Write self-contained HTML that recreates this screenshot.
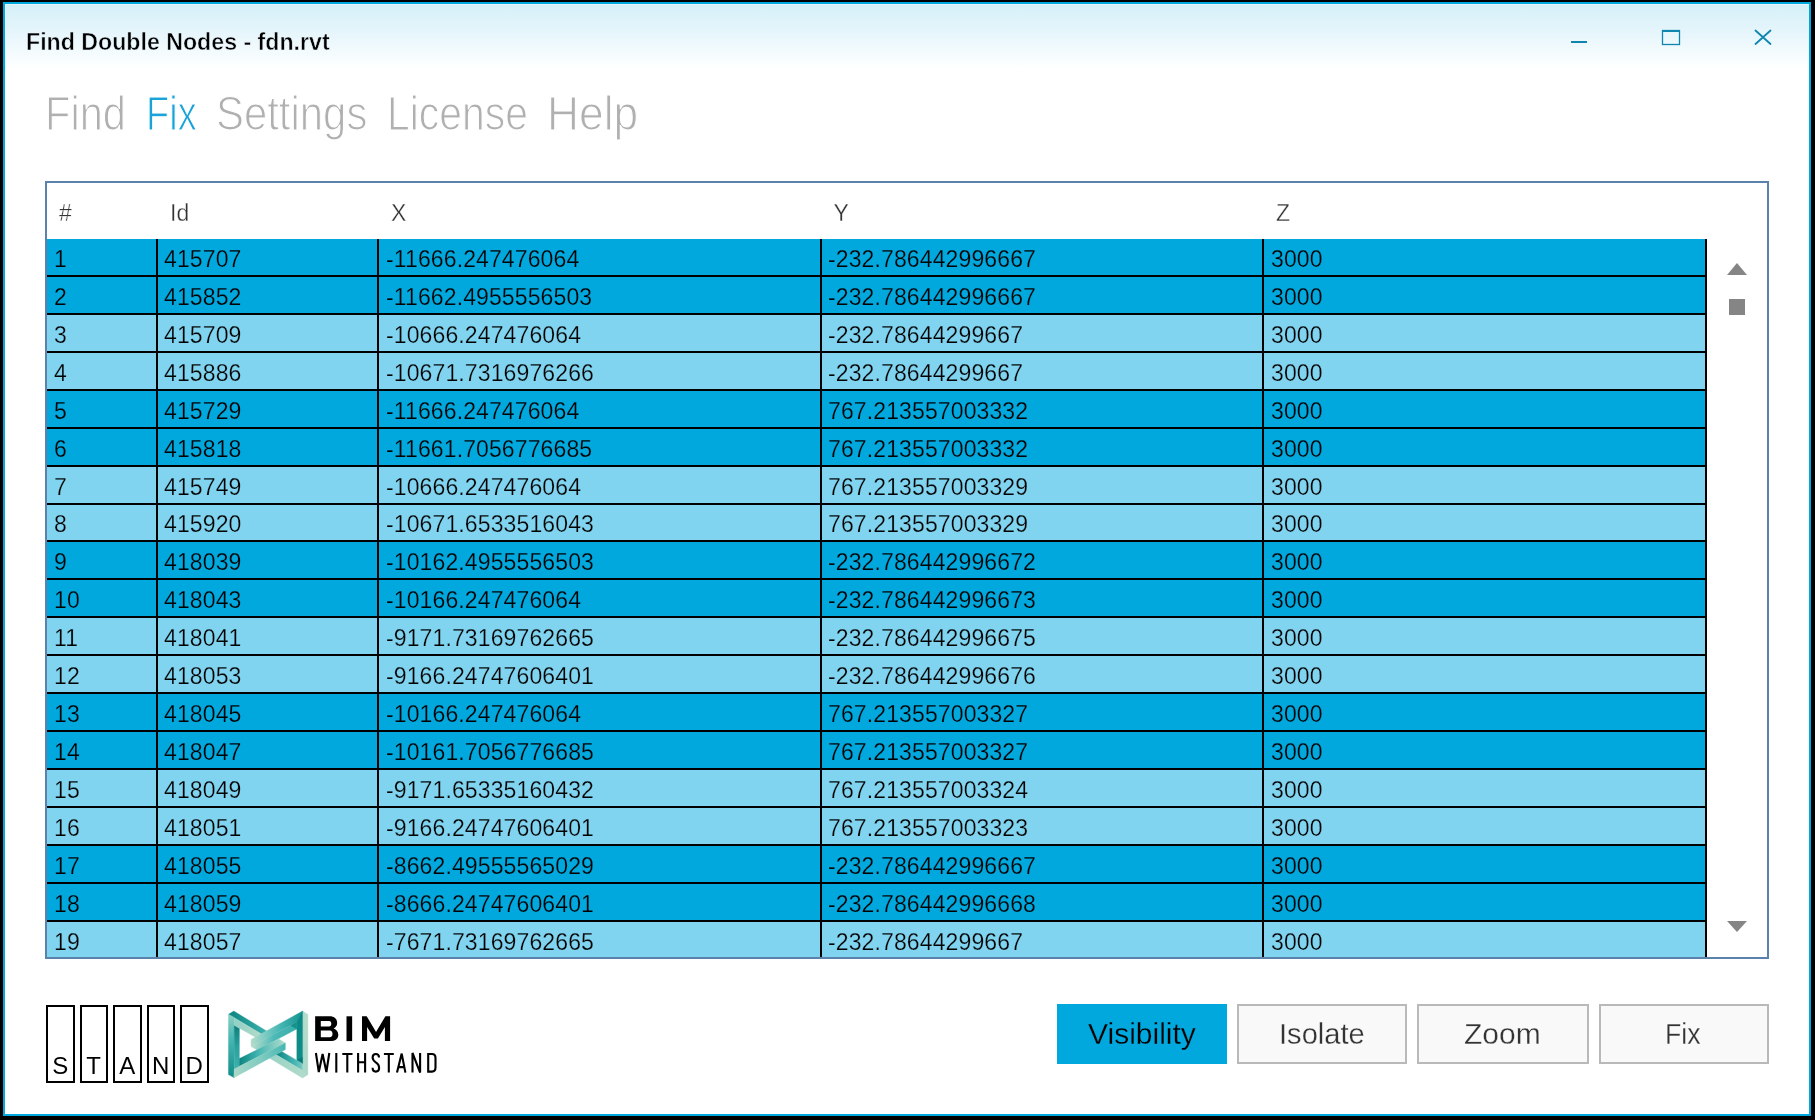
<!DOCTYPE html>
<html><head><meta charset="utf-8"><style>
*{margin:0;padding:0;box-sizing:border-box}
html,body{width:1815px;height:1120px;overflow:hidden;background:#000}
body{position:relative;font-family:"Liberation Sans",sans-serif}
.a{position:absolute}
.win{position:absolute;left:3px;top:2px;width:1808px;height:1114px;border:2px solid #00a8e0;background:#fff;overflow:hidden}
.tg{position:absolute;left:0;top:0;width:1804px;height:65px;background:linear-gradient(to bottom,#d5f0f9 0%,#e4f5fb 40%,#f6fcfe 80%,#ffffff 100%)}
.t{position:absolute;white-space:nowrap;line-height:1}
.tab{font-size:49px;color:#b0b0b0;transform-origin:0 0;-webkit-text-stroke:1.2px #fff}
.cell{font-size:23px;color:#000;letter-spacing:0.12px}
.hdr{font-size:23px;color:#333;-webkit-text-stroke:0.3px #fff}
.btn{position:absolute;top:1004px;height:60px;width:170px;border:2px solid #b9b9b9;background:#f9f9f9}
.bt{font-size:30px;color:#333;-webkit-text-stroke:0.3px #f9f9f9}
.st{position:absolute;top:1005px;width:29px;height:78px;border:2px solid #000;background:#fff}
.sl{position:absolute;font-size:24px;color:#000;line-height:1}
</style></head><body><div style="position:absolute;left:0;top:0;width:1815px;height:1120px;background:#000;will-change:transform">

<div class="win"><div class="tg"></div></div>
<div class="a" style="left:5px;top:4px;width:1804px;height:1px;background:#e4f5fb"></div>
<div class="a" style="left:5px;top:4px;width:1px;height:66px;background:#e4f5fb"></div>
<div class="t" style="left:26px;top:30px;font-size:24px;font-weight:bold;color:#000;-webkit-text-stroke:0.5px #e7f5fb;transform:scaleX(0.965);transform-origin:0 0">Find Double Nodes - fdn.rvt</div>
<svg class="a" style="left:1540px;top:10px" width="260" height="50" viewBox="1540 10 260 50">
<rect x="1571" y="41" width="16" height="2" fill="#0e86b0"/>
<rect x="1662.5" y="30.5" width="17" height="14" fill="none" stroke="#0e86b0" stroke-width="1.3"/>
<rect x="1662" y="30" width="18" height="2" fill="#0e86b0"/>
<path d="M1755.5 30.5 L1770.5 44 M1770.5 30.5 L1755.5 44" stroke="#0e86b0" stroke-width="1.8" stroke-linecap="round"/>
</svg>
<div class="t tab" style="left:45.41px;top:89px;color:#b0b0b0;transform:scaleX(0.8483)">Find</div>
<div class="t tab" style="left:146.13px;top:89px;color:#1aa3d8;transform:scaleX(0.7749)">Fix</div>
<div class="t tab" style="left:216.24px;top:89px;color:#b0b0b0;transform:scaleX(0.8548)">Settings</div>
<div class="t tab" style="left:387.06px;top:89px;color:#b0b0b0;transform:scaleX(0.8344)">License</div>
<div class="t tab" style="left:546.78px;top:89px;color:#b0b0b0;transform:scaleX(0.9046)">Help</div>
<div class="a" style="left:45px;top:181px;width:1724px;height:778px;border:2px solid #5a82aa;background:#fff"></div>
<div class="t hdr" style="left:59px;top:202px">#</div>
<div class="t hdr" style="left:170px;top:202px">Id</div>
<div class="t hdr" style="left:391px;top:202px">X</div>
<div class="t hdr" style="left:833.5px;top:202px">Y</div>
<div class="t hdr" style="left:1276px;top:202px">Z</div>
<div class="a" style="left:47px;top:239px;width:1658px;height:36px;background:#00a8de"></div>
<div class="a" style="left:47px;top:275px;width:1660px;height:2px;background:#000"></div>
<div class="t cell" style="left:54px;top:248.0px;-webkit-text-stroke:0.25px #00a8de">1</div>
<div class="t cell" style="left:164px;top:248.0px;-webkit-text-stroke:0.25px #00a8de">415707</div>
<div class="t cell" style="left:386px;top:248.0px;-webkit-text-stroke:0.25px #00a8de">-11666.247476064</div>
<div class="t cell" style="left:828px;top:248.0px;-webkit-text-stroke:0.25px #00a8de">-232.786442996667</div>
<div class="t cell" style="left:1271px;top:248.0px;-webkit-text-stroke:0.25px #00a8de">3000</div>
<div class="a" style="left:47px;top:277px;width:1658px;height:36px;background:#00a8de"></div>
<div class="a" style="left:47px;top:313px;width:1660px;height:2px;background:#000"></div>
<div class="t cell" style="left:54px;top:285.9px;-webkit-text-stroke:0.25px #00a8de">2</div>
<div class="t cell" style="left:164px;top:285.9px;-webkit-text-stroke:0.25px #00a8de">415852</div>
<div class="t cell" style="left:386px;top:285.9px;-webkit-text-stroke:0.25px #00a8de">-11662.4955556503</div>
<div class="t cell" style="left:828px;top:285.9px;-webkit-text-stroke:0.25px #00a8de">-232.786442996667</div>
<div class="t cell" style="left:1271px;top:285.9px;-webkit-text-stroke:0.25px #00a8de">3000</div>
<div class="a" style="left:47px;top:315px;width:1658px;height:36px;background:#80d4f0"></div>
<div class="a" style="left:47px;top:351px;width:1660px;height:2px;background:#000"></div>
<div class="t cell" style="left:54px;top:323.8px;-webkit-text-stroke:0.25px #80d4f0">3</div>
<div class="t cell" style="left:164px;top:323.8px;-webkit-text-stroke:0.25px #80d4f0">415709</div>
<div class="t cell" style="left:386px;top:323.8px;-webkit-text-stroke:0.25px #80d4f0">-10666.247476064</div>
<div class="t cell" style="left:828px;top:323.8px;-webkit-text-stroke:0.25px #80d4f0">-232.78644299667</div>
<div class="t cell" style="left:1271px;top:323.8px;-webkit-text-stroke:0.25px #80d4f0">3000</div>
<div class="a" style="left:47px;top:353px;width:1658px;height:36px;background:#80d4f0"></div>
<div class="a" style="left:47px;top:389px;width:1660px;height:2px;background:#000"></div>
<div class="t cell" style="left:54px;top:361.8px;-webkit-text-stroke:0.25px #80d4f0">4</div>
<div class="t cell" style="left:164px;top:361.8px;-webkit-text-stroke:0.25px #80d4f0">415886</div>
<div class="t cell" style="left:386px;top:361.8px;-webkit-text-stroke:0.25px #80d4f0">-10671.7316976266</div>
<div class="t cell" style="left:828px;top:361.8px;-webkit-text-stroke:0.25px #80d4f0">-232.78644299667</div>
<div class="t cell" style="left:1271px;top:361.8px;-webkit-text-stroke:0.25px #80d4f0">3000</div>
<div class="a" style="left:47px;top:391px;width:1658px;height:36px;background:#00a8de"></div>
<div class="a" style="left:47px;top:427px;width:1660px;height:2px;background:#000"></div>
<div class="t cell" style="left:54px;top:399.7px;-webkit-text-stroke:0.25px #00a8de">5</div>
<div class="t cell" style="left:164px;top:399.7px;-webkit-text-stroke:0.25px #00a8de">415729</div>
<div class="t cell" style="left:386px;top:399.7px;-webkit-text-stroke:0.25px #00a8de">-11666.247476064</div>
<div class="t cell" style="left:828px;top:399.7px;-webkit-text-stroke:0.25px #00a8de">767.213557003332</div>
<div class="t cell" style="left:1271px;top:399.7px;-webkit-text-stroke:0.25px #00a8de">3000</div>
<div class="a" style="left:47px;top:429px;width:1658px;height:36px;background:#00a8de"></div>
<div class="a" style="left:47px;top:465px;width:1660px;height:2px;background:#000"></div>
<div class="t cell" style="left:54px;top:437.6px;-webkit-text-stroke:0.25px #00a8de">6</div>
<div class="t cell" style="left:164px;top:437.6px;-webkit-text-stroke:0.25px #00a8de">415818</div>
<div class="t cell" style="left:386px;top:437.6px;-webkit-text-stroke:0.25px #00a8de">-11661.7056776685</div>
<div class="t cell" style="left:828px;top:437.6px;-webkit-text-stroke:0.25px #00a8de">767.213557003332</div>
<div class="t cell" style="left:1271px;top:437.6px;-webkit-text-stroke:0.25px #00a8de">3000</div>
<div class="a" style="left:47px;top:467px;width:1658px;height:36px;background:#80d4f0"></div>
<div class="a" style="left:47px;top:503px;width:1660px;height:2px;background:#000"></div>
<div class="t cell" style="left:54px;top:475.5px;-webkit-text-stroke:0.25px #80d4f0">7</div>
<div class="t cell" style="left:164px;top:475.5px;-webkit-text-stroke:0.25px #80d4f0">415749</div>
<div class="t cell" style="left:386px;top:475.5px;-webkit-text-stroke:0.25px #80d4f0">-10666.247476064</div>
<div class="t cell" style="left:828px;top:475.5px;-webkit-text-stroke:0.25px #80d4f0">767.213557003329</div>
<div class="t cell" style="left:1271px;top:475.5px;-webkit-text-stroke:0.25px #80d4f0">3000</div>
<div class="a" style="left:47px;top:505px;width:1658px;height:35px;background:#80d4f0"></div>
<div class="a" style="left:47px;top:540px;width:1660px;height:2px;background:#000"></div>
<div class="t cell" style="left:54px;top:513.4px;-webkit-text-stroke:0.25px #80d4f0">8</div>
<div class="t cell" style="left:164px;top:513.4px;-webkit-text-stroke:0.25px #80d4f0">415920</div>
<div class="t cell" style="left:386px;top:513.4px;-webkit-text-stroke:0.25px #80d4f0">-10671.6533516043</div>
<div class="t cell" style="left:828px;top:513.4px;-webkit-text-stroke:0.25px #80d4f0">767.213557003329</div>
<div class="t cell" style="left:1271px;top:513.4px;-webkit-text-stroke:0.25px #80d4f0">3000</div>
<div class="a" style="left:47px;top:542px;width:1658px;height:36px;background:#00a8de"></div>
<div class="a" style="left:47px;top:578px;width:1660px;height:2px;background:#000"></div>
<div class="t cell" style="left:54px;top:551.4px;-webkit-text-stroke:0.25px #00a8de">9</div>
<div class="t cell" style="left:164px;top:551.4px;-webkit-text-stroke:0.25px #00a8de">418039</div>
<div class="t cell" style="left:386px;top:551.4px;-webkit-text-stroke:0.25px #00a8de">-10162.4955556503</div>
<div class="t cell" style="left:828px;top:551.4px;-webkit-text-stroke:0.25px #00a8de">-232.786442996672</div>
<div class="t cell" style="left:1271px;top:551.4px;-webkit-text-stroke:0.25px #00a8de">3000</div>
<div class="a" style="left:47px;top:580px;width:1658px;height:36px;background:#00a8de"></div>
<div class="a" style="left:47px;top:616px;width:1660px;height:2px;background:#000"></div>
<div class="t cell" style="left:54px;top:589.3px;-webkit-text-stroke:0.25px #00a8de">10</div>
<div class="t cell" style="left:164px;top:589.3px;-webkit-text-stroke:0.25px #00a8de">418043</div>
<div class="t cell" style="left:386px;top:589.3px;-webkit-text-stroke:0.25px #00a8de">-10166.247476064</div>
<div class="t cell" style="left:828px;top:589.3px;-webkit-text-stroke:0.25px #00a8de">-232.786442996673</div>
<div class="t cell" style="left:1271px;top:589.3px;-webkit-text-stroke:0.25px #00a8de">3000</div>
<div class="a" style="left:47px;top:618px;width:1658px;height:36px;background:#80d4f0"></div>
<div class="a" style="left:47px;top:654px;width:1660px;height:2px;background:#000"></div>
<div class="t cell" style="left:54px;top:627.2px;-webkit-text-stroke:0.25px #80d4f0">11</div>
<div class="t cell" style="left:164px;top:627.2px;-webkit-text-stroke:0.25px #80d4f0">418041</div>
<div class="t cell" style="left:386px;top:627.2px;-webkit-text-stroke:0.25px #80d4f0">-9171.73169762665</div>
<div class="t cell" style="left:828px;top:627.2px;-webkit-text-stroke:0.25px #80d4f0">-232.786442996675</div>
<div class="t cell" style="left:1271px;top:627.2px;-webkit-text-stroke:0.25px #80d4f0">3000</div>
<div class="a" style="left:47px;top:656px;width:1658px;height:36px;background:#80d4f0"></div>
<div class="a" style="left:47px;top:692px;width:1660px;height:2px;background:#000"></div>
<div class="t cell" style="left:54px;top:665.1px;-webkit-text-stroke:0.25px #80d4f0">12</div>
<div class="t cell" style="left:164px;top:665.1px;-webkit-text-stroke:0.25px #80d4f0">418053</div>
<div class="t cell" style="left:386px;top:665.1px;-webkit-text-stroke:0.25px #80d4f0">-9166.24747606401</div>
<div class="t cell" style="left:828px;top:665.1px;-webkit-text-stroke:0.25px #80d4f0">-232.786442996676</div>
<div class="t cell" style="left:1271px;top:665.1px;-webkit-text-stroke:0.25px #80d4f0">3000</div>
<div class="a" style="left:47px;top:694px;width:1658px;height:36px;background:#00a8de"></div>
<div class="a" style="left:47px;top:730px;width:1660px;height:2px;background:#000"></div>
<div class="t cell" style="left:54px;top:703.0px;-webkit-text-stroke:0.25px #00a8de">13</div>
<div class="t cell" style="left:164px;top:703.0px;-webkit-text-stroke:0.25px #00a8de">418045</div>
<div class="t cell" style="left:386px;top:703.0px;-webkit-text-stroke:0.25px #00a8de">-10166.247476064</div>
<div class="t cell" style="left:828px;top:703.0px;-webkit-text-stroke:0.25px #00a8de">767.213557003327</div>
<div class="t cell" style="left:1271px;top:703.0px;-webkit-text-stroke:0.25px #00a8de">3000</div>
<div class="a" style="left:47px;top:732px;width:1658px;height:36px;background:#00a8de"></div>
<div class="a" style="left:47px;top:768px;width:1660px;height:2px;background:#000"></div>
<div class="t cell" style="left:54px;top:741.0px;-webkit-text-stroke:0.25px #00a8de">14</div>
<div class="t cell" style="left:164px;top:741.0px;-webkit-text-stroke:0.25px #00a8de">418047</div>
<div class="t cell" style="left:386px;top:741.0px;-webkit-text-stroke:0.25px #00a8de">-10161.7056776685</div>
<div class="t cell" style="left:828px;top:741.0px;-webkit-text-stroke:0.25px #00a8de">767.213557003327</div>
<div class="t cell" style="left:1271px;top:741.0px;-webkit-text-stroke:0.25px #00a8de">3000</div>
<div class="a" style="left:47px;top:770px;width:1658px;height:36px;background:#80d4f0"></div>
<div class="a" style="left:47px;top:806px;width:1660px;height:2px;background:#000"></div>
<div class="t cell" style="left:54px;top:778.9px;-webkit-text-stroke:0.25px #80d4f0">15</div>
<div class="t cell" style="left:164px;top:778.9px;-webkit-text-stroke:0.25px #80d4f0">418049</div>
<div class="t cell" style="left:386px;top:778.9px;-webkit-text-stroke:0.25px #80d4f0">-9171.65335160432</div>
<div class="t cell" style="left:828px;top:778.9px;-webkit-text-stroke:0.25px #80d4f0">767.213557003324</div>
<div class="t cell" style="left:1271px;top:778.9px;-webkit-text-stroke:0.25px #80d4f0">3000</div>
<div class="a" style="left:47px;top:808px;width:1658px;height:36px;background:#80d4f0"></div>
<div class="a" style="left:47px;top:844px;width:1660px;height:2px;background:#000"></div>
<div class="t cell" style="left:54px;top:816.8px;-webkit-text-stroke:0.25px #80d4f0">16</div>
<div class="t cell" style="left:164px;top:816.8px;-webkit-text-stroke:0.25px #80d4f0">418051</div>
<div class="t cell" style="left:386px;top:816.8px;-webkit-text-stroke:0.25px #80d4f0">-9166.24747606401</div>
<div class="t cell" style="left:828px;top:816.8px;-webkit-text-stroke:0.25px #80d4f0">767.213557003323</div>
<div class="t cell" style="left:1271px;top:816.8px;-webkit-text-stroke:0.25px #80d4f0">3000</div>
<div class="a" style="left:47px;top:846px;width:1658px;height:36px;background:#00a8de"></div>
<div class="a" style="left:47px;top:882px;width:1660px;height:2px;background:#000"></div>
<div class="t cell" style="left:54px;top:854.7px;-webkit-text-stroke:0.25px #00a8de">17</div>
<div class="t cell" style="left:164px;top:854.7px;-webkit-text-stroke:0.25px #00a8de">418055</div>
<div class="t cell" style="left:386px;top:854.7px;-webkit-text-stroke:0.25px #00a8de">-8662.49555565029</div>
<div class="t cell" style="left:828px;top:854.7px;-webkit-text-stroke:0.25px #00a8de">-232.786442996667</div>
<div class="t cell" style="left:1271px;top:854.7px;-webkit-text-stroke:0.25px #00a8de">3000</div>
<div class="a" style="left:47px;top:884px;width:1658px;height:36px;background:#00a8de"></div>
<div class="a" style="left:47px;top:920px;width:1660px;height:2px;background:#000"></div>
<div class="t cell" style="left:54px;top:892.6px;-webkit-text-stroke:0.25px #00a8de">18</div>
<div class="t cell" style="left:164px;top:892.6px;-webkit-text-stroke:0.25px #00a8de">418059</div>
<div class="t cell" style="left:386px;top:892.6px;-webkit-text-stroke:0.25px #00a8de">-8666.24747606401</div>
<div class="t cell" style="left:828px;top:892.6px;-webkit-text-stroke:0.25px #00a8de">-232.786442996668</div>
<div class="t cell" style="left:1271px;top:892.6px;-webkit-text-stroke:0.25px #00a8de">3000</div>
<div class="a" style="left:47px;top:922px;width:1658px;height:35px;background:#80d4f0"></div>
<div class="t cell" style="left:54px;top:930.6px;-webkit-text-stroke:0.25px #80d4f0">19</div>
<div class="t cell" style="left:164px;top:930.6px;-webkit-text-stroke:0.25px #80d4f0">418057</div>
<div class="t cell" style="left:386px;top:930.6px;-webkit-text-stroke:0.25px #80d4f0">-7671.73169762665</div>
<div class="t cell" style="left:828px;top:930.6px;-webkit-text-stroke:0.25px #80d4f0">-232.78644299667</div>
<div class="t cell" style="left:1271px;top:930.6px;-webkit-text-stroke:0.25px #80d4f0">3000</div>
<div class="a" style="left:156px;top:239px;width:2px;height:718px;background:#000"></div>
<div class="a" style="left:377px;top:239px;width:2px;height:718px;background:#000"></div>
<div class="a" style="left:820px;top:239px;width:2px;height:718px;background:#000"></div>
<div class="a" style="left:1262px;top:239px;width:2px;height:718px;background:#000"></div>
<div class="a" style="left:1705px;top:239px;width:2px;height:718px;background:#000"></div>
<svg class="a" style="left:1720px;top:255px" width="40" height="700" viewBox="1720 255 40 700">
<polygon points="1727,275 1747,275 1737,263" fill="#858585"/>
<rect x="1729" y="299" width="16" height="16" fill="#858585"/>
<polygon points="1727,921 1747,921 1737,932" fill="#858585"/>
</svg>
<div class="st" style="left:46px;width:29px"></div>
<div class="st" style="left:80px;width:28px"></div>
<div class="st" style="left:113px;width:29px"></div>
<div class="st" style="left:147px;width:28px"></div>
<div class="st" style="left:180px;width:29px"></div>
<div class="sl" style="left:45.7px;top:1054px;width:29px;text-align:center">S</div>
<div class="sl" style="left:79.2px;top:1054px;width:29px;text-align:center">T</div>
<div class="sl" style="left:112.7px;top:1054px;width:29px;text-align:center">A</div>
<div class="sl" style="left:146.2px;top:1054px;width:29px;text-align:center">N</div>
<div class="sl" style="left:179.7px;top:1054px;width:29px;text-align:center">D</div>
<svg class="a" style="left:220px;top:1000px" width="230" height="90" viewBox="220 1000 230 90">
<defs>
<linearGradient id="gRo" x1="0" y1="0" x2="0" y2="1"><stop offset="0" stop-color="#b6ddcc"/><stop offset="1" stop-color="#a9d7c7"/></linearGradient>
<linearGradient id="gRi" x1="0" y1="0" x2="0" y2="1"><stop offset="0" stop-color="#0b8884"/><stop offset="1" stop-color="#0f8d89"/></linearGradient>
<linearGradient id="gLo" x1="0" y1="0" x2="0" y2="1"><stop offset="0" stop-color="#8fd0c4"/><stop offset="0.35" stop-color="#4db9b6"/><stop offset="1" stop-color="#0f8c88"/></linearGradient>
<linearGradient id="gLi" x1="0" y1="0" x2="0" y2="1"><stop offset="0" stop-color="#0d7f7b"/><stop offset="0.5" stop-color="#2aa29e"/><stop offset="1" stop-color="#3fb1ae"/></linearGradient>
<linearGradient id="gULt" gradientUnits="userSpaceOnUse" x1="229" y1="0" x2="266" y2="0"><stop offset="0" stop-color="#0b8581"/><stop offset="1" stop-color="#3cb0ad"/></linearGradient>
<linearGradient id="gULf" gradientUnits="userSpaceOnUse" x1="229" y1="0" x2="260" y2="0"><stop offset="0" stop-color="#8acec2"/><stop offset="1" stop-color="#b2dbca"/></linearGradient>
<linearGradient id="gDt" gradientUnits="userSpaceOnUse" x1="276" y1="0" x2="303" y2="0"><stop offset="0" stop-color="#0a847f"/><stop offset="0.7" stop-color="#48b7b4"/><stop offset="1" stop-color="#7ccac0"/></linearGradient>
<linearGradient id="gDf" gradientUnits="userSpaceOnUse" x1="270" y1="0" x2="304" y2="0"><stop offset="0" stop-color="#98d3c5"/><stop offset="1" stop-color="#b0dbca"/></linearGradient>
<linearGradient id="gUt" gradientUnits="userSpaceOnUse" x1="251" y1="0" x2="302" y2="0"><stop offset="0" stop-color="#b5dcca"/><stop offset="0.35" stop-color="#6ec6c0"/><stop offset="0.6" stop-color="#42b4b1"/><stop offset="1" stop-color="#17948f"/></linearGradient>
<linearGradient id="gUf" gradientUnits="userSpaceOnUse" x1="251" y1="0" x2="297" y2="0"><stop offset="0" stop-color="#b8ddcb"/><stop offset="0.25" stop-color="#86cdc2"/><stop offset="0.5" stop-color="#4cb9b6"/><stop offset="1" stop-color="#38aeab"/></linearGradient>
<linearGradient id="gLt" gradientUnits="userSpaceOnUse" x1="239" y1="0" x2="286" y2="0"><stop offset="0" stop-color="#0a837f"/><stop offset="0.4" stop-color="#42b4b1"/><stop offset="0.8" stop-color="#8fd0c3"/><stop offset="1" stop-color="#b6dccb"/></linearGradient>
<linearGradient id="gLf" gradientUnits="userSpaceOnUse" x1="234" y1="0" x2="286" y2="0"><stop offset="0" stop-color="#a9d8c8"/><stop offset="0.55" stop-color="#7ccac0"/><stop offset="1" stop-color="#45b6b3"/></linearGradient>
</defs>
<polygon points="302.6,1011.1 307.9,1014.4 307.9,1074.5 302.6,1077.6" fill="url(#gRo)" stroke="url(#gRo)" stroke-width="0.35" stroke-linejoin="round"/>
<polygon points="296.8,1018 302.6,1011.1 302.6,1064 296.8,1060.6" fill="url(#gRi)" stroke="url(#gRi)" stroke-width="0.35" stroke-linejoin="round"/>
<polygon points="296.8,1060.4 302.4,1057.2 302.4,1063.6" fill="#087a76" stroke="#087a76" stroke-width="0.35" stroke-linejoin="round"/>
<polygon points="228.4,1014.5 234.2,1017.5 234.2,1077.8 228.4,1074.6" fill="url(#gLo)" stroke="url(#gLo)" stroke-width="0.35" stroke-linejoin="round"/>
<polygon points="234.2,1025.3 239.4,1028.2 239.4,1067.1 234.2,1070" fill="url(#gLi)" stroke="url(#gLi)" stroke-width="0.35" stroke-linejoin="round"/>
<polygon points="228.6,1014.2 233.8,1011.1 266.6,1030.9 261.4,1033.9" fill="url(#gULt)" stroke="url(#gULt)" stroke-width="0.35" stroke-linejoin="round"/>
<polygon points="228.4,1014.5 261.4,1033.9 255.5,1037.2 234.2,1025.3 234.2,1017.5" fill="url(#gULf)" stroke="url(#gULf)" stroke-width="0.35" stroke-linejoin="round"/>
<polygon points="275.9,1054.5 281.7,1051.4 302.4,1063.4 302.6,1070.5" fill="url(#gDt)" stroke="url(#gDt)" stroke-width="0.35" stroke-linejoin="round"/>
<polygon points="269.7,1058.2 275.9,1054.5 302.6,1070.5 307.9,1074.5 302.4,1077.9" fill="url(#gDf)" stroke="url(#gDf)" stroke-width="0.35" stroke-linejoin="round"/>
<polygon points="251,1039.4 302.6,1011.1 296.8,1021.9 251,1046.5" fill="url(#gUt)" stroke="url(#gUt)" stroke-width="0.35" stroke-linejoin="round"/>
<polygon points="251,1046.5 296.8,1021.9 296.8,1028.9 257.3,1050.1" fill="url(#gUf)" stroke="url(#gUf)" stroke-width="0.35" stroke-linejoin="round"/>
<polygon points="290.6,1025.5 296.8,1021.9 296.8,1028.9" fill="#13918d" stroke="#13918d" stroke-width="0.35" stroke-linejoin="round"/>
<polygon points="239.4,1058.6 278.8,1038.9 285.4,1043 239.4,1066.2" fill="url(#gLt)" stroke="url(#gLt)" stroke-width="0.35" stroke-linejoin="round"/>
<polygon points="239.4,1066.2 285.4,1043 285.4,1049.6 233.8,1077.8 234.2,1069" fill="url(#gLf)" stroke="url(#gLf)" stroke-width="0.35" stroke-linejoin="round"/>
<path fill="#000" fill-rule="evenodd" d="M315.15,1016.3 H329.5 C334.5,1016.3 337.2,1019.2 337.2,1022.8 C337.2,1025.5 335.8,1027.6 333.65,1028.6 C336.6,1029.5 338.3,1032 338.3,1035 C338.3,1038.8 335.4,1041.1 330,1041.1 H315.15 Z M320.8,1021 H329 C330.6,1021 331.3,1022.2 331.3,1023.8 C331.3,1025.4 330.6,1026.6 329,1026.6 H320.8 Z M320.8,1030.6 H329.8 C331.6,1030.6 332.5,1032 332.5,1033.9 C332.5,1035.8 331.6,1037.2 329.8,1037.2 H320.8 Z"/>
<rect x="346.5" y="1016.3" width="5.65" height="24.8" fill="#000"/>
<polygon fill="#000" points="362,1016.3 366.7,1016.3 376.05,1032 385.4,1016.3 390.1,1016.3 390.1,1041.1 384.9,1041.1 384.9,1026.9 377.9,1038.6 374.2,1038.6 367.1,1026.9 367.1,1041.1 362,1041.1"/>
<g fill="none" stroke="#000" stroke-width="2.1">
<path d="M315.9,1053 L318.8,1072 L322.6,1054 L326.4,1072 L329.3,1053"/>
<path d="M336.3,1053 V1072.6"/>
<path d="M342.3,1054 H352.5 M347.3,1054 V1072.6"/>
<path d="M358.1,1053 V1072.6 M365.1,1053 V1072.6 M358.1,1062.2 H365.1"/>
<path d="M379,1057.5 C379,1055 377.6,1054 375.8,1054 C373.8,1054 372.6,1055.4 372.6,1057.6 C372.6,1060.5 374.5,1061.5 376.5,1062.8 C378.5,1064.1 379.1,1065.5 379.1,1068 C379.1,1070.5 377.8,1071.6 375.8,1071.6 C373.6,1071.6 372.6,1070.2 372.6,1067.8"/>
<path d="M383.9,1054 H393.8 M388.8,1054 V1072.6"/>
<path d="M397,1072.6 L401.7,1053.6 L405.4,1072.6 M398.6,1067.1 H404.3"/>
<path d="M412.5,1072.6 V1053 L420.1,1072.6 V1053"/>
<path d="M428.2,1054 H432 C434.3,1054 435.5,1055.5 435.5,1058 V1067.5 C435.5,1070 434.3,1071.6 432,1071.6 H428.2 Z"/>
</g>
</svg>
<div class="a" style="left:1057px;top:1004px;width:170px;height:60px;background:#00a8de"></div>
<div class="btn" style="left:1237px"></div>
<div class="btn" style="left:1417px;width:172px"></div>
<div class="btn" style="left:1599px"></div>
<div class="t bt" style="left:1088px;top:1019px;color:#000;-webkit-text-stroke:0.3px #00a8de;transform:scaleX(1);transform-origin:0 0">Visibility</div>
<div class="t bt" style="left:1278.5px;top:1019px;color:#333;-webkit-text-stroke:0.3px #f9f9f9;transform:scaleX(0.97);transform-origin:0 0">Isolate</div>
<div class="t bt" style="left:1464px;top:1019px;color:#333;-webkit-text-stroke:0.3px #f9f9f9;transform:scaleX(1);transform-origin:0 0">Zoom</div>
<div class="t bt" style="left:1665px;top:1019px;color:#333;-webkit-text-stroke:0.3px #f9f9f9;transform:scaleX(0.89);transform-origin:0 0">Fix</div>
</div></body></html>
